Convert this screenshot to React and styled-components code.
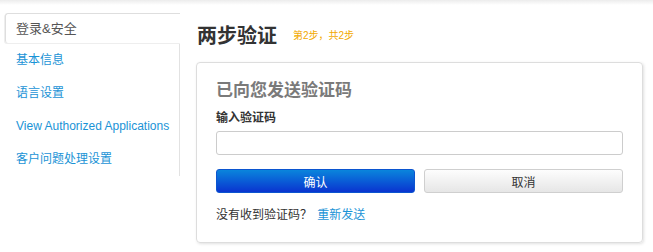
import React from "react";
import styled, { createGlobalStyle } from "styled-components";

const GlobalStyle = createGlobalStyle`
  body {
    margin: 0;
    background: #fff;
    font-family: "Liberation Sans", "Noto Sans CJK SC", sans-serif;
  }
`;

const menu = ["基本信息", "语言设置", "View Authorized Applications", "客户问题处理设置"];

const App = () => {
  return (
    <>
      <GlobalStyle />
      <Page>
        <Sidebar>
          <ActiveItem>登录&amp;安全</ActiveItem>
          <MenuList>
            {menu.map((m) => (
              <MenuItem key={m} href="#">
                {m}
              </MenuItem>
            ))}
          </MenuList>
        </Sidebar>
        <Main>
          <Heading>
            两步验证<Step>第2步，共2步</Step>
          </Heading>
          <Card>
            <CardTitle>已向您发送验证码</CardTitle>
            <Label>输入验证码</Label>
            <Input type="text" />
            <Buttons>
              <PrimaryButton>确认</PrimaryButton>
              <Button>取消</Button>
            </Buttons>
            <Hint>
              没有收到验证码？ <Link href="#">重新发送</Link>
            </Hint>
          </Card>
        </Main>
      </Page>
    </>
  );
};

export default App;

const Page = styled.div`
  display: flex;
  height: 252px;
  background: linear-gradient(to bottom, #ececec 0, #fff 5px);
`;

const Sidebar = styled.div`
  width: 175px;
  margin-left: 5px;
  padding-top: 13px;
`;

const ActiveItem = styled.div`
  height: 29px;
  line-height: 29px;
  padding-left: 10px;
  border: 1px solid #dedede;
  border-right: none;
  border-bottom: none;
  border-radius: 3px 0 0 3px;
  font-size: 13px;
  color: #555;
  box-shadow: -1px 1px 0 #eee;
`;

const MenuList = styled.div`
  display: flex;
  flex-direction: column;
  width: 174px;
  border-right: 1px solid #e2e2e2;
  border-top: 1px solid transparent;
`;

const MenuItem = styled.a`
  height: 33px;
  line-height: 33px;
  padding-left: 11px;
  font-size: 12px;
  color: #1a93d6;
  text-decoration: none;
  white-space: nowrap;
`;

const Main = styled.div`
  flex: 1;
  padding: 22px 10px 0 16px;
`;

const Heading = styled.h1`
  margin: 0 0 12px 1px;
  font-size: 20px;
  line-height: 28px;
  font-weight: bold;
  color: #333;
  display: flex;
  align-items: center;
`;

const Step = styled.span`
  margin-left: 16px;
  font-size: 10px;
  font-weight: normal;
  color: #f2a900;
`;

const Card = styled.div`
  border: 1px solid #ddd;
  border-radius: 4px;
  box-shadow: 1px 1px 3px rgba(0, 0, 0, 0.12);
  padding: 16px 19px 20px 19px;
  height: 143px;
`;

const CardTitle = styled.div`
  font-size: 17px;
  font-weight: bold;
  color: #7a7a7a;
  line-height: 24px;
  margin-bottom: 8px;
`;

const Label = styled.div`
  font-size: 12px;
  font-weight: bold;
  color: #333;
  line-height: 14px;
  margin-bottom: 6px;
`;

const Input = styled.input`
  display: block;
  box-sizing: border-box;
  width: 100%;
  height: 24px;
  border: 1px solid #ccc;
  border-radius: 3px;
  outline: none;
`;

const Buttons = styled.div`
  display: grid;
  grid-template-columns: 1fr 1fr;
  gap: 9px;
  margin-top: 14px;
`;

const Button = styled.button`
  height: 24px;
  border: 1px solid #cfcfcf;
  border-radius: 3px;
  background: linear-gradient(to bottom, #fdfdfd, #e6e6e6);
  font-family: inherit;
  font-size: 12px;
  color: #333;
  padding: 0;
`;

const PrimaryButton = styled(Button)`
  border-color: #0b55d0;
  background: linear-gradient(to bottom, #0a85dc, #0a34d0);
  color: #fff;
`;

const Hint = styled.div`
  margin-top: 12px;
  font-size: 12px;
  color: #333;
`;

const Link = styled.a`
  color: #1a93d6;
  text-decoration: none;
  margin-left: 2px;
`;
